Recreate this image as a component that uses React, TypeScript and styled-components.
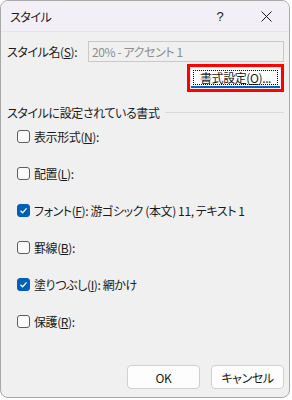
import React from 'react';
import styled, { createGlobalStyle } from 'styled-components';

const GlobalStyle = createGlobalStyle`
  html, body {
    margin: 0;
    padding: 0;
    background: #ffffff;
  }
  body {
    font-family: "Noto Sans CJK JP", "Noto Sans", sans-serif;
    font-size: 12px;
    color: #1a1a1a;
    font-feature-settings: "palt";
    letter-spacing: -0.4px;
  }
`;

const Window = styled.div`
  width: 290px;
  height: 398px;
  box-sizing: border-box;
  border: 1px solid #a8a8a8;
  border-radius: 8px;
  overflow: hidden;
  background: #f0f0f0;
  display: flex;
  flex-direction: column;
`;

const TitleBar = styled.div`
  height: 30px;
  flex-shrink: 0;
  display: flex;
  align-items: center;
  background: #f3eff7;
  border-bottom: 1px solid #e6e3ea;
  padding-left: 9px;
`;

const Title = styled.span`
  flex: 1;
  font-size: 12px;
`;

const TitleButton = styled.div<{ $w: number }>`
  width: ${(p) => p.$w}px;
  height: 30px;
  display: flex;
  align-items: center;
  justify-content: center;
  font-family: "Liberation Sans", sans-serif;
  font-size: 13px;
`;

const Body = styled.div`
  flex: 1;
  display: flex;
  flex-direction: column;
  padding: 8px 5px 8px 6px;
`;

const NameRow = styled.div`
  display: flex;
  align-items: center;
  height: 22px;
`;

const Label = styled.span`
  width: 81px;
  white-space: nowrap;
`;

const NameInput = styled.div`
  flex: 1;
  height: 21px;
  box-sizing: border-box;
  border: 1px solid #c9c9c9;
  background: #f0f0f0;
  color: #8d8d8d;
  display: flex;
  align-items: center;
  padding-left: 3px;
`;

const FormatRow = styled.div`
  display: flex;
  justify-content: flex-end;
  margin-top: 2px;
`;

const Highlight = styled.div`
  border: 3px solid #ff0000;
  padding: 1px;
`;

const FormatButton = styled.div`
  width: 89px;
  height: 20px;
  box-sizing: border-box;
  background: #fdfdfd;
  border-bottom: 2px solid #0067c0;
  display: flex;
  align-items: center;
  justify-content: center;
  position: relative;
  &::after {
    content: '';
    position: absolute;
    inset: 2px 2px 1px 2px;
    border: 1px dotted #000;
  }
`;

const GroupHeader = styled.div`
  display: flex;
  align-items: center;
  gap: 5px;
  margin-top: 12px;
`;

const GroupLine = styled.div`
  flex: 1;
  height: 1px;
  background: #dadada;
`;

const List = styled.div`
  display: flex;
  flex-direction: column;
  padding-left: 10px;
  margin-top: 5px;
  gap: 16px;
`;

const Row = styled.div`
  display: flex;
  align-items: center;
  gap: 4px;
  height: 21px;
`;

const Box = styled.span<{ $checked: boolean }>`
  width: 13px;
  height: 13px;
  box-sizing: border-box;
  border-radius: 3px;
  border: 1px solid ${(p) => (p.$checked ? '#005fb8' : '#5d5d5d')};
  background: ${(p) => (p.$checked ? '#005fb8' : '#fbfbfb')};
  display: flex;
  align-items: center;
  justify-content: center;
  flex-shrink: 0;
`;

const Footer = styled.div`
  margin-top: auto;
  display: flex;
  justify-content: flex-end;
  gap: 11px;
`;

const Button = styled.div`
  width: 73px;
  height: 24px;
  box-sizing: border-box;
  border: 1px solid #d0d0d0;
  border-radius: 4px;
  background: #fdfdfd;
  display: flex;
  align-items: center;
  justify-content: center;
`;

const U = styled.span`
  text-decoration: underline;
`;

const Check = () => (
  <svg width="9" height="9" viewBox="0 0 9 9">
    <path d="M1.5 4.8 L3.6 6.8 L7.6 2.4" fill="none" stroke="#fff" strokeWidth="1.3" />
  </svg>
);

type Item = { label: string; key: string; value?: string; checked: boolean };

const items: Item[] = [
  { label: '表示形式', key: 'N', checked: false },
  { label: '配置', key: 'L', checked: false },
  { label: 'フォント', key: 'F', value: '游ゴシック (本文) 11, テキスト 1', checked: true },
  { label: '罫線', key: 'B', checked: false },
  { label: '塗りつぶし', key: 'I', value: '網かけ', checked: true },
  { label: '保護', key: 'R', checked: false },
];

const App: React.FC = () => {
  return (
    <>
      <GlobalStyle />
      <Window>
        <TitleBar>
          <Title>スタイル</Title>
          <TitleButton $w={46}>?</TitleButton>
          <TitleButton $w={46}>
            <svg width="11" height="11" viewBox="0 0 11 11">
              <path d="M0.5 0.5 L10.5 10.5 M10.5 0.5 L0.5 10.5" stroke="#1a1a1a" strokeWidth="1" />
            </svg>
          </TitleButton>
        </TitleBar>
        <Body>
          <NameRow>
            <Label>
              スタイル名(<U>S</U>):
            </Label>
            <NameInput>20% - アクセント 1</NameInput>
          </NameRow>
          <FormatRow>
            <Highlight>
              <FormatButton>
                書式設定(<U>O</U>)...
              </FormatButton>
            </Highlight>
          </FormatRow>
          <GroupHeader>
            スタイルに設定されている書式
            <GroupLine />
          </GroupHeader>
          <List>
            {items.map((item) => (
              <Row key={item.key}>
                <Box $checked={item.checked}>{item.checked && <Check />}</Box>
                <span>
                  {item.label}(<U>{item.key}</U>):{item.value ? ` ${item.value}` : ''}
                </span>
              </Row>
            ))}
          </List>
          <Footer>
            <Button>OK</Button>
            <Button>キャンセル</Button>
          </Footer>
        </Body>
      </Window>
    </>
  );
};

export default App;
